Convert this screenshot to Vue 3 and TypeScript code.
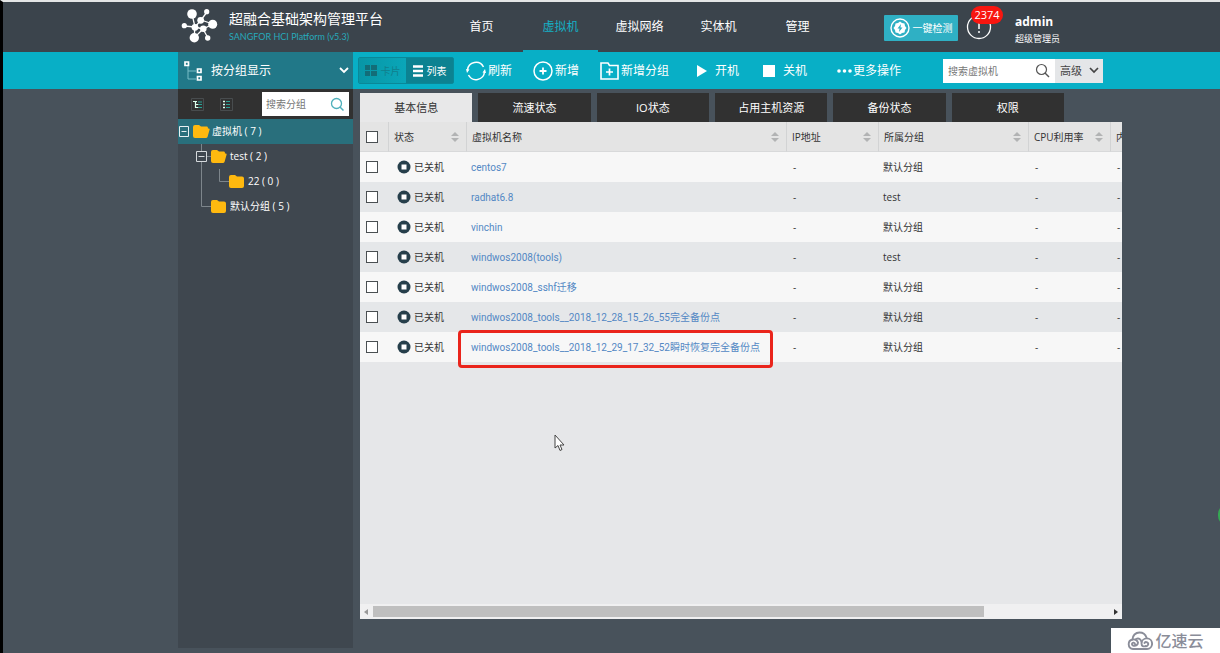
<script setup lang="ts">
import { ref } from 'vue'

interface Vm {
  name: string
  group: string
  marked?: boolean
}

const nav: string[] = ['首页', '虚拟机', '虚拟网络', '实体机', '管理']
const activeNav = ref('虚拟机')

const tabs: string[] = ['基本信息', '流速状态', 'IO状态', '占用主机资源', '备份状态', '权限']
const activeTab = ref('基本信息')

const vms: Vm[] = [
  { name: 'centos7', group: '默认分组' },
  { name: 'radhat6.8', group: 'test' },
  { name: 'vinchin', group: '默认分组' },
  { name: 'windwos2008(tools)', group: 'test' },
  { name: 'windwos2008_sshf迁移', group: '默认分组' },
  { name: 'windwos2008_tools__2018_12_28_15_26_55完全备份点', group: '默认分组' },
  { name: 'windwos2008_tools__2018_12_29_17_32_52瞬时恢复完全备份点', group: '默认分组', marked: true },
]

const columns: { label: string; cls: string; sortable: boolean }[] = [
  { label: '状态', cls: 'c-state', sortable: true },
  { label: '虚拟机名称', cls: 'c-name', sortable: true },
  { label: 'IP地址', cls: 'c-ip', sortable: true },
  { label: '所属分组', cls: 'c-group', sortable: true },
  { label: 'CPU利用率', cls: 'c-cpu', sortable: true },
  { label: '内', cls: 'c-mem', sortable: false },
]
</script>

<template>
  <div class="app">
    <header class="header">
      <svg class="logo" width="40" height="40" viewBox="0 0 40 40" aria-hidden="true">
        <path d="M12 7 15 20 4 19M27 5 21 13 33 17M21 13 15 20 14 31M15 20 23 22 33 17M23 22 28 31M23 22 14 31" fill="none" stroke="#fff" stroke-width="1.3" />
        <g fill="#fff">
          <circle cx="12" cy="7" r="4.8" /><circle cx="26.700" cy="4.700" r="2.600" />
          <circle cx="20.700" cy="13.300" r="3.400" /><circle cx="32.700" cy="17.300" r="4.500" />
          <circle cx="4.300" cy="18.700" r="2.600" /><circle cx="15" cy="20.300" r="3.400" />
          <circle cx="23.300" cy="21.700" r="3.300" /><circle cx="14.300" cy="30.700" r="4.700" />
          <circle cx="27.700" cy="31" r="2.700" />
        </g>
      </svg>
      <div class="brand">
        <h1>超融合基础架构管理平台</h1>
        <p>SANGFOR HCI Platform (v5.3)</p>
      </div>
      <nav class="nav">
        <a v-for="n in nav" :key="n" href="#" :class="{ active: n === activeNav }" @click.prevent="activeNav = n">{{ n }}</a>
      </nav>
      <button class="check" type="button">
        <svg width="20" height="20" viewBox="0 0 20 20" aria-hidden="true">
          <circle cx="10" cy="10" r="9" fill="none" stroke="#fff" stroke-width="1.400" />
          <path d="M10 3.500 12 5l2.500.500.500 2.500 1.500 2-1.500 2-.500 2.500-2.500.500-2 1.500-2-1.500-2.500-.500L5 12l-1.500-2L5 8l.500-2.500L8 5z" fill="#fff" />
          <path d="M11 6 7.500 10.500h2L9 14l3.500-4.500h-2z" fill="#2fb0c4" />
        </svg>
        一键检测
      </button>
      <button class="alert" type="button" aria-label="2374">
        <svg width="26" height="26" viewBox="0 0 26 26" aria-hidden="true">
          <circle cx="13" cy="13" r="11.500" fill="none" stroke="#fff" stroke-width="1.300" />
          <path d="M13 8v7M13 17v2" stroke="#fff" stroke-width="1.500" />
        </svg>
        <span class="badge">2374</span>
      </button>
      <div class="user">
        <strong>admin</strong>
        <span>超级管理员</span>
      </div>
    </header>

    <div class="toolbar">
      <label class="grouping">
        <svg width="20" height="22" viewBox="0 0 20 22" aria-hidden="true">
          <path d="M4 6v13h8M4 11h8" fill="none" stroke="#78bcc6" />
          <path d="M1 2h3.500v3.500H1zM13.500 9H17v3.500h-3.500zM13.500 16.500H17V20h-3.500z" fill="#217888" stroke="#fff" stroke-width="1.700" />
        </svg>
        <select aria-label="显示方式"><option>按分组显示</option></select>
        <svg class="chev" width="10" height="7" viewBox="0 0 10 7" aria-hidden="true"><path d="m1 1 4 4 4-4" fill="none" stroke="#fff" stroke-width="1.800" /></svg>
      </label>
      <div class="toggle">
        <button type="button" class="card">
          <svg width="12" height="11" viewBox="0 0 12 11" aria-hidden="true"><path d="M0 0h5v5H0zM6 0h6v5H6zM0 6h5v5H0zM6 6h6v5H6z" fill="#136d78" /></svg>
          卡片
        </button>
        <button type="button" class="list">
          <svg width="10" height="12" viewBox="0 0 10 12" aria-hidden="true"><path d="M0 1.500h10M0 6h10M0 10.500h10" stroke="#fff" stroke-width="2.500" /></svg>
          列表
        </button>
      </div>
      <div class="tools">
        <button type="button">
          <svg width="20" height="20" viewBox="0 0 20 20" aria-hidden="true">
            <path d="M1.500 9A8.500 8.500 0 0 1 17.500 6M18.500 11A8.500 8.500 0 0 1 2.500 14" fill="none" stroke="#fff" stroke-width="1.500" />
            <path d="m0 8 3.500.500L1 12zM20 12l-3.500-.500L19 8z" fill="#fff" />
          </svg>
          刷新
        </button>
        <button type="button">
          <svg width="20" height="20" viewBox="0 0 20 20" aria-hidden="true">
            <circle cx="10" cy="10" r="9" fill="none" stroke="#fff" stroke-width="1.500" />
            <path d="M10 6.500v7M6.500 10h7" stroke="#fff" stroke-width="1.800" />
          </svg>
          新增
        </button>
        <button type="button">
          <svg width="19" height="18" viewBox="0 0 19 18" aria-hidden="true">
            <path d="M1 1h7l1.500 2.500H18V17H1z" fill="none" stroke="#fff" stroke-width="1.600" />
            <path d="M9.500 6.500v7M6 10h7" stroke="#fff" stroke-width="1.700" />
          </svg>
          新增分组
        </button>
        <button type="button" class="wide power">
          <svg width="10" height="12" viewBox="0 0 10 12" aria-hidden="true"><path d="m0 0 10 6-10 6z" fill="#fff" /></svg>
          开机
        </button>
        <button type="button" class="wide stop">
          <svg width="12" height="12" viewBox="0 0 12 12" aria-hidden="true"><path d="M0 0h12v12H0z" fill="#fff" /></svg>
          关机
        </button>
        <button type="button" class="more">
          <svg width="15" height="6" viewBox="0 0 15 6" aria-hidden="true"><g fill="#fff"><circle cx="2" cy="3" r="1.800" /><circle cx="7.500" cy="3" r="1.800" /><circle cx="13" cy="3" r="1.800" /></g></svg>
          更多操作
        </button>
      </div>
      <div class="search">
        <input type="text" placeholder="搜索虚拟机" aria-label="搜索虚拟机" />
        <button type="button" aria-label="搜索">
          <svg width="15" height="15" viewBox="0 0 15 15" aria-hidden="true"><circle cx="6.500" cy="6.500" r="5" fill="none" stroke="#555" stroke-width="1.200" /><path d="m10 10 4 4" stroke="#555" stroke-width="1.400" /></svg>
        </button>
        <label class="advanced">
          <select aria-label="高级"><option>高级</option></select>
          <svg class="chev" width="10" height="7" viewBox="0 0 10 7" aria-hidden="true"><path d="m1 1 4 4 4-4" fill="none" stroke="#444" stroke-width="1.700" /></svg>
        </label>
      </div>
    </div>

    <div class="body">
      <aside class="side">
        <div class="side-tools">
          <button type="button" aria-label="展开">
            <svg width="13" height="13" viewBox="0 0 13 13" aria-hidden="true"><path d="M.5.5h12v12H.5z" fill="none" stroke="#484c4e" /><path d="M2 3.500h4M4.500 3.500v6h3M4.500 6.500h3" fill="none" stroke="#dfe" stroke-width="1.200" /><path d="M7 4h4M7.500 6.500h3.500M7.500 9.500h3.500" stroke="#2aa195" /></svg>
          </button>
          <button type="button" aria-label="收起">
            <svg width="13" height="13" viewBox="0 0 13 13" aria-hidden="true"><path d="M.5.5h12v12H.5z" fill="none" stroke="#484c4e" /><path d="M3 3.500h2M3 6.500h2M3 9.500h2" stroke="#dfe" stroke-width="1.500" /><path d="M6 3.500h4M6 6.500h4M6 9.500h4" stroke="#2aa195" stroke-width="1.200" /></svg>
          </button>
          <div class="side-search">
            <input type="text" placeholder="搜索分组" aria-label="搜索分组" />
            <svg width="15" height="15" viewBox="0 0 15 15" aria-hidden="true"><circle cx="6.500" cy="6.500" r="5" fill="none" stroke="#4fb0bb" stroke-width="1.300" /><path d="m10 10 3.500 3.500" stroke="#4fb0bb" stroke-width="1.500" /></svg>
          </div>
        </div>
        <ul class="tree">
          <li class="root">
            <svg width="32" height="25" viewBox="0 0 32 25" aria-hidden="true"><path d="M1.500 7.500h9v10h-9zM3.500 12.500h5" fill="none" stroke="#e8f0f2" /><path d="M15 8q0-2 2-2h4l2 1.500h6q1 0 1 2h1q1 0 .5 1.500l-2 7q-.5 1-1.500 1H17q-2 0-2-2z" fill="#ffb90f" /></svg>
            <a href="#">虚拟机 ( 7 )</a>
          </li>
          <li>
            <svg width="50" height="25" viewBox="0 0 50 25" aria-hidden="true"><path d="M23.500 0v7M23.500 18v7M28.500 12.500H33" stroke="#7d858b" /><path d="M18.500 7.500h10v10h-10zM20.500 12.500h6" fill="none" stroke="#d6dadd" /><path d="M33 8q0-2 2-2h4l2 1.500h5q1 0 1 2h1q1 0 .5 1.500l-2 7q-.5 1-1.500 1H35q-2 0-2-2z" fill="#ffb90f" /></svg>
            <a href="#">test ( 2 )</a>
          </li>
          <li>
            <svg width="68" height="25" viewBox="0 0 68 25" aria-hidden="true"><path d="M23.500 0v25M41.500 0v12.500H51" fill="none" stroke="#7d858b" /><path d="M51 8q0-2 2-2h4l2 1.500h5q2 0 2 2V17q0 2-2 2H53q-2 0-2-2z" fill="#ffb90f" /></svg>
            <a href="#">22 ( 0 )</a>
          </li>
          <li>
            <svg width="50" height="25" viewBox="0 0 50 25" aria-hidden="true"><path d="M23.500 0v12.500H33" fill="none" stroke="#7d858b" /><path d="M33 8q0-2 2-2h4l2 1.500h5q2 0 2 2V17q0 2-2 2H35q-2 0-2-2z" fill="#ffb90f" /></svg>
            <a href="#">默认分组 ( 5 )</a>
          </li>
        </ul>
      </aside>

      <main class="main">
        <div class="tabs" role="tablist">
          <button v-for="t in tabs" :key="t" type="button" role="tab" :aria-selected="t === activeTab" :class="{ active: t === activeTab }" @click="activeTab = t">{{ t }}</button>
        </div>
        <section class="panel">
          <div class="scroll">
            <table>
              <thead>
                <tr>
                  <th class="c-check"><input type="checkbox" aria-label="全选" /></th>
                  <th v-for="c in columns" :key="c.label" :class="c.cls">
                    <div class="th">
                      <span>{{ c.label }}</span>
                      <svg v-if="c.sortable" width="8" height="10" viewBox="0 0 8 10" aria-hidden="true"><path d="m4 0 4 4H0zM4 10 0 6h8z" fill="#b2b3b4" /></svg>
                    </div>
                  </th>
                </tr>
              </thead>
              <tbody>
                <tr v-for="vm in vms" :key="vm.name">
                  <td class="c-check"><input type="checkbox" :aria-label="vm.name" /></td>
                  <td>
                    <div class="state">
                      <svg width="14" height="14" viewBox="0 0 14 14" aria-hidden="true"><circle cx="7" cy="7" r="6.500" fill="#263f4b" /><path d="M4.500 4.500h5v5h-5z" fill="#fff" /></svg>
                      已关机
                    </div>
                  </td>
                  <td class="name">
                    <a href="#">{{ vm.name }}</a>
                    <span v-if="vm.marked" class="mark"></span>
                  </td>
                  <td class="value">-</td>
                  <td>{{ vm.group }}</td>
                  <td class="value">-</td>
                  <td class="value">-</td>
                </tr>
              </tbody>
            </table>
          </div>
          <div class="hbar" aria-hidden="true">
            <svg width="4" height="6" viewBox="0 0 4 6"><path d="M4 0v6L0 3z" fill="#999" /></svg>
            <div class="track"><div class="thumb"></div></div>
            <svg width="4" height="6" viewBox="0 0 4 6"><path d="M0 0v6l4-3z" fill="#333" /></svg>
          </div>
        </section>
      </main>
    </div>

    <svg class="cursor" width="11" height="18" viewBox="0 0 11 18" aria-hidden="true"><path d="M1 1v13l3-2.500L6 16.500l2-1-2-4.500h4z" fill="#fff" stroke="#444" /></svg>
    <span class="edge"></span>
    <div class="watermark">
      <svg width="26" height="20" viewBox="0 0 26 20" aria-hidden="true">
        <g fill="none" stroke="#8a8d99" stroke-width="1.900" stroke-linecap="round">
          <path d="M5.500 8.500C5.500 4.500 8.500 1.500 12.500 1.500c3.500 0 6 2 7 5" />
          <path d="M8 13a1.500 1.500 0 1 0-2 1.500c3 1 5-1 5-3A4.800 4.800 0 1 0 6 18h14a5.300 5.300 0 1 0-5.500-5.500c0 2.500 2 3.500 4 2.500a2 2 0 1 0-1-3" />
          <path d="M9 8c3-1.500 5 .5 5.500 3" />
        </g>
      </svg>
      亿速云
    </div>
  </div>
</template>

<style>
body {
  margin: 0;
  background: #48525b;
}
</style>

<style scoped>
.app {
  position: relative;
  display: flex;
  flex-direction: column;
  box-sizing: border-box;
  min-height: 100vh;
  overflow: hidden;
  border-left: 3px solid #000;
  border-top: 2px solid #e4e6e6;
  background: #48525b;
  color: #333;
  font: 10px/14px "Open Sans", "Noto Sans CJK SC", sans-serif;
}
a { text-decoration: none; }
button, input, select {
  box-sizing: border-box;
  margin: 0;
  padding: 0;
  border: 0;
  border-radius: 0;
  background: none;
  color: inherit;
  font: inherit;
}
button { cursor: pointer; white-space: nowrap; }
svg { display: block; flex: none; }
select { appearance: none; }

.header {
  display: flex;
  align-items: center;
  height: 50px;
  padding: 0 158px 0 177px;
  background: #3b444c;
  color: #fff;
}
.logo { margin-right: 9px; }
.brand { width: 215px; white-space: nowrap; }
.brand h1 {
  margin: 0;
  font-size: 14px;
  line-height: 20px;
  font-weight: 400;
}
.brand p {
  margin: 0;
  color: #27a9bb;
  font-family: Lato, "Open Sans", sans-serif;
  font-size: 9px;
  line-height: 16px;
}
.nav { display: flex; gap: 4px; align-self: stretch; }
.nav a {
  box-sizing: border-box;
  width: 75px;
  border-bottom: 2px solid transparent;
  color: #fff;
  font-size: 12px;
  line-height: 50px;
  text-align: center;
}
.nav a.active { color: #14b0c6; border-color: #08afc6; }
.check {
  display: flex;
  align-items: center;
  justify-content: center;
  gap: 3px;
  width: 74px;
  height: 26px;
  margin: 2px 0 0 auto;
  border-radius: 1px;
  background: #2fb0c4;
}
.alert { position: relative; margin-left: 8px; }
.badge {
  position: absolute;
  left: 5px;
  top: -8px;
  width: 32px;
  border-radius: 9px;
  background: #f81610;
  font-size: 11px;
  line-height: 18px;
  text-align: center;
}
.user { display: flex; flex-direction: column; width: 47px; margin: 6px 0 0 23px; white-space: nowrap; }
.user strong { font-size: 12px; line-height: 17px; }
.user span { font-size: 9px; line-height: 17px; }

.toolbar {
  display: flex;
  align-items: center;
  height: 37px;
  padding: 0 117px 0 175px;
  background: #08afc6;
  color: #fff;
  font-size: 12px;
}
.grouping {
  position: relative;
  display: flex;
  align-items: center;
  gap: 7px;
  box-sizing: border-box;
  flex: none;
  width: 175px;
  height: 37px;
  padding-left: 6px;
  background: #217888;
}
.grouping select { flex: 1; height: 30px; }
.chev { position: absolute; right: 4px; pointer-events: none; }
.toggle {
  display: flex;
  margin-left: 5px;
  border: 1px solid #0a8898;
  border-radius: 2px;
  font-size: 10px;
}
.toggle button {
  display: flex;
  align-items: center;
  justify-content: center;
  gap: 4px;
  width: 47px;
  height: 25px;
}
.toggle .card { background: linear-gradient(90deg, #0896a6, #0aa6b8); color: #117f8c; }
.toggle .list { background: #0c8291; }
.tools { display: flex; gap: 21px; margin-left: 12px; }
.tools button { display: flex; align-items: center; gap: 2px; height: 26px; }
.tools .wide { gap: 8px; }
.tools .power { margin-left: 7px; }
.tools .stop { margin-left: 3px; }
.tools .more { gap: 1px; margin-left: 9px; }
.search {
  display: flex;
  width: 160px;
  height: 24px;
  margin-left: auto;
  background: #fff;
  color: #444;
}
.search input { flex: 1; min-width: 0; padding-left: 5px; font-size: 10px; outline: 0; }
.search button { width: 24px; padding-left: 4px; }
.advanced {
  position: relative;
  display: flex;
  align-items: center;
  width: 48px;
  background: #e4e6e8;
  font-size: 11px;
}
.advanced select { width: 48px; height: 24px; padding-left: 5px; }
input::placeholder { color: #777; opacity: 1; }

.body {
  display: flex;
  flex: 1;
  padding: 0 98px 0 175px;
}
.side {
  flex: none;
  width: 175px;
  margin-bottom: 5px;
  background: #3f474f;
}
.side-tools {
  display: flex;
  align-items: center;
  gap: 16px;
  height: 30px;
  padding: 0 4px 0 13px;
  background: #313131;
}
.side-search {
  display: flex;
  align-items: center;
  flex: 1;
  min-width: 0;
  height: 24px;
  margin-left: 13px;
  padding-right: 4px;
  background: #fff;
}
.side-search input { flex: 1; min-width: 0; height: 24px; padding-left: 4px; color: #444; outline: 0; }
.tree { margin: 0; padding: 0; list-style: none; }
.tree li { display: flex; gap: 2px; height: 25px; line-height: 25px; }
.tree .root { background: #296f7c; }
.tree a { color: #fff; }

.main {
  display: flex;
  flex: 1;
  flex-direction: column;
  min-width: 0;
  margin: 4px 0 34px 7px;
}
.tabs { display: flex; gap: 6px; max-width: 704px; }
.tabs button {
  flex: 1;
  height: 29px;
  background: #313131;
  color: #fff;
  font-size: 11px;
}
.tabs .active { background: #e8e8e9; color: #333; }
.panel {
  display: flex;
  flex: 1;
  flex-direction: column;
  background: #e6e7e9;
}
.scroll { flex: 1; overflow: hidden; }
table { width: 100%; border-collapse: separate; border-spacing: 0; table-layout: fixed; }
th {
  box-sizing: border-box;
  height: 30px;
  padding: 0;
  border-right: 1px solid #d2d3d4;
  border-bottom: 1px solid #d8d9da;
  background: #e4e4e4;
  font-weight: 400;
  text-align: left;
}
.th { display: flex; align-items: center; justify-content: space-between; padding: 0 7px 0 5px; white-space: nowrap; }
td { height: 30px; padding: 0 0 0 4px; white-space: nowrap; }
.value { padding-left: 6px; }
tbody tr { background: #f7f7f7; }
tbody tr:nth-child(even) { background: #e5e7e9; }
.c-check { width: 29px; padding: 0 0 0 6px; }
.c-state { width: 78px; }
.c-ip { width: 92px; }
.c-group { width: 150px; }
.c-cpu { width: 82px; }
.c-mem { width: 11px; overflow: hidden; border-right: 0; }
input[type="checkbox"] {
  display: block;
  appearance: none;
  width: 12px;
  height: 12px;
  border: 1px solid #4a4f52;
  background: #fff;
}
.state { display: flex; align-items: center; gap: 3px; padding-left: 4px; }
.name { position: relative; }
.name a { color: #5388c4; font-family: Roboto, "Noto Sans CJK SC", sans-serif; }
.mark {
  position: absolute;
  inset: -2px 14px -6px -9px;
  border: 3px solid #ea251c;
  border-radius: 4px;
}
.hbar {
  display: flex;
  align-items: center;
  gap: 5px;
  height: 15px;
  padding: 0 4px;
  background: #f0f0f1;
}
.track { flex: 1; }
.thumb { width: 83%; height: 11px; background: #bfbfbf; }

.cursor { position: absolute; left: 551px; top: 432px; }
.edge {
  position: absolute;
  right: -16px;
  top: 503px;
  width: 18px;
  height: 20px;
  border-radius: 10px;
  background: #35a853;
}
.watermark {
  position: absolute;
  right: 0;
  bottom: 0;
  display: flex;
  align-items: center;
  justify-content: center;
  gap: 2px;
  width: 109px;
  height: 25px;
  background: #fff;
  color: #8a8d99;
  font-size: 16px;
  font-weight: 500;
}
</style>
